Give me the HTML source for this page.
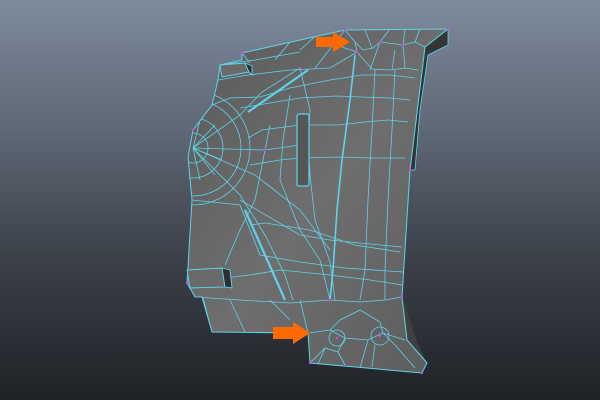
<!DOCTYPE html>
<html><head><style>
html,body{margin:0;padding:0;width:600px;height:400px;overflow:hidden;background:linear-gradient(#7d8b9b 0%,#5c6573 35%,#3b4048 65%,#1f2226 100%);}
svg{position:absolute;left:0;top:0}
</style></head><body>
<svg width="600" height="400" viewBox="0 0 600 400">
<defs>
<linearGradient id="g" x1="0" y1="0" x2="1" y2="1"><stop offset="0" stop-color="#5a5a5a"/><stop offset="0.5" stop-color="#6e6e6e"/><stop offset="1" stop-color="#5c5c5c"/></linearGradient>
<clipPath id="c"><polygon points="242,53 345,30 448,29 425,47 410,170 402,297 407,340 427,363 422,373 310,363 308,333 212,332 202,297 195,297 187,283 192,200 188,157 193,130 212,105 218,80 220,65 242,60"/></clipPath>
</defs>
<polygon points="448,29 448,45 428,55 420,110 415,170 410,170 425,47" fill="#353535" stroke="#5fd3ea" stroke-width="0.8"/>
<polygon points="402,297 407,340 427,363 418,345 410,320" fill="#404040"/>
<polygon points="242,53 345,30 448,29 425,47 410,170 402,297 407,340 427,363 422,373 310,363 308,333 212,332 202,297 195,297 187,283 192,200 188,157 193,130 212,105 218,80 220,65 242,60" fill="url(#g)" stroke="#5fd3ea" stroke-width="1"/>
<g fill="none" stroke="#5fd3ea" stroke-width="0.8" clip-path="url(#c)">
<path d="M345,30 L355,42 L363,50 L373,48 L380,42 L403,45 L415,42 L425,47"/>
<path d="M355,42 L357,52 L372,69 L390,70 L405,68 L418,70"/>
<path d="M342,47 L357,52 M365,30 L372,48 M390,29 L380,42 M405,29 L403,45 M420,29 L415,42 M380,42 L370,70 M395,50 L392,70 M403,45 L405,68"/>
<path d="M220,65 L255,60 L300,52 M242,53 L250,63 M290,42 L275,60 M320,32 L300,50 M345,30 L315,68"/>
<path d="M218,80 L248,75 L290,70 L330,68 L357,52"/>
<path d="M212,105 L230,98 L260,97 L290,88 L330,80 L362,75 L390,75 L415,78"/>
<path d="M240,108 L270,103 L300,98 L336,96 L362,97 L390,98 L410,100"/>
<path d="M248,138 L262,130 L300,125 L338,125 L365,122 L388,120 L408,122"/>
<path d="M250,165 L280,160 L300,158 L340,157 L370,158 L405,158"/>
<path d="M240,200 L300,235 L330,240 L380,245 L402,247"/>
<path d="M250,225 L265,223 L310,230 L355,245 L400,252"/>
<path d="M192,200 L240,205 L260,255 L300,262 L345,268 L403,272"/>
<path d="M187,283 L225,278 L250,275 L280,270 L330,275 L370,280 L402,285"/>
<path d="M195,297 L240,300 L290,303 L330,300 L360,302 L385,300 L402,297"/>
<path d="M212,332 L203,298 M230,300 L245,332 M270,300 L290,320 M300,300 L308,333"/>
<path d="M193,148 L240,115 L262,92 L300,68 M193,148 L265,150 L300,145 M193,148 L255,175 L300,210 L330,250 M193,148 L240,195 L265,235 L285,275 L293,300"/>
<path d="M300,68 L310,110 L308,140 L310,175 L315,220 L330,262 L335,300"/>
<path d="M270,125 L262,165 L255,200 L240,230 L225,265"/>
<path d="M290,95 L283,140 L280,180 L300,230 L320,260 L330,300"/>
<path d="M355,55 L350,100 L342,160 L337,210 L333,270 L330,300" stroke-width="1.6"/>
<path d="M375,70 L372,130 L368,200 L365,270 L360,300"/>
<path d="M395,70 L392,130 L388,200 L385,270 L385,300"/>
<circle cx="193" cy="148" r="15"/>
<circle cx="193" cy="148" r="30"/>
<circle cx="193" cy="148" r="48"/>
<circle cx="193" cy="148" r="57"/>
<path d="M193,148 L200,120 M193,148 L215,125 M193,148 L222,160 M193,148 L215,175 M193,148 L200,180"/>
<path d="M245,210 L285,300" stroke-width="2.2"/>
<path d="M248,112 L308,70" stroke-width="2.2"/>
<path d="M308,333 L330,330 L345,338 L368,340 L383,333 L405,340"/>
<path d="M310,363 L325,348 L338,352 L345,338 M338,352 L345,365 M375,345 L372,367 M383,333 L395,345 L415,368 M368,340 L360,368 M325,348 L318,364 M330,330 L340,320 L360,310 L380,322 L383,333 M310,363 L300,330"/>
<circle cx="337" cy="338" r="8"/><circle cx="380" cy="336" r="9"/>
</g>
<rect x="297" y="114" width="12" height="72" rx="2" fill="#565656" stroke="#5fd3ea" stroke-width="1.2"/>
<g fill="#6a6a6a" stroke="#5fd3ea" stroke-width="0.9">
<polygon points="220,65 245,63 249,72 222,77"/>
<polygon points="245,63 252,66 252,75 249,72" fill="#2e2e2e"/>
<polygon points="187,270 222,268 225,287 190,288"/>
<polygon points="222,268 230,270 232,288 225,287" fill="#2e2e2e"/>
</g>
<g fill="#e040e0">
<circle cx="242" cy="53" r="1.2"/><circle cx="345" cy="30" r="1.2"/><circle cx="448" cy="29" r="1.2"/><circle cx="357" cy="52" r="1.2"/><circle cx="380" cy="42" r="1.2"/><circle cx="403" cy="45" r="1.2"/><circle cx="300" cy="68" r="1.2"/><circle cx="265" cy="150" r="1.2"/><circle cx="337" cy="338" r="1.2"/><circle cx="380" cy="336" r="1.2"/><circle cx="330" cy="300" r="1.2"/><circle cx="402" cy="297" r="1.2"/><circle cx="410" cy="170" r="1.2"/><circle cx="193" cy="130" r="1.2"/><circle cx="187" cy="283" r="1.2"/><circle cx="422" cy="373" r="1.2"/><circle cx="310" cy="363" r="1.2"/>
</g>
<polygon points="316,37 333,37 333,32 350,42 333,52 333,47 316,47" fill="#ff6a00"/>
<polygon points="273,327 293,327 293,322 310,333 293,344 293,339 273,339" fill="#ff6a00"/>
</svg>
</body></html>
